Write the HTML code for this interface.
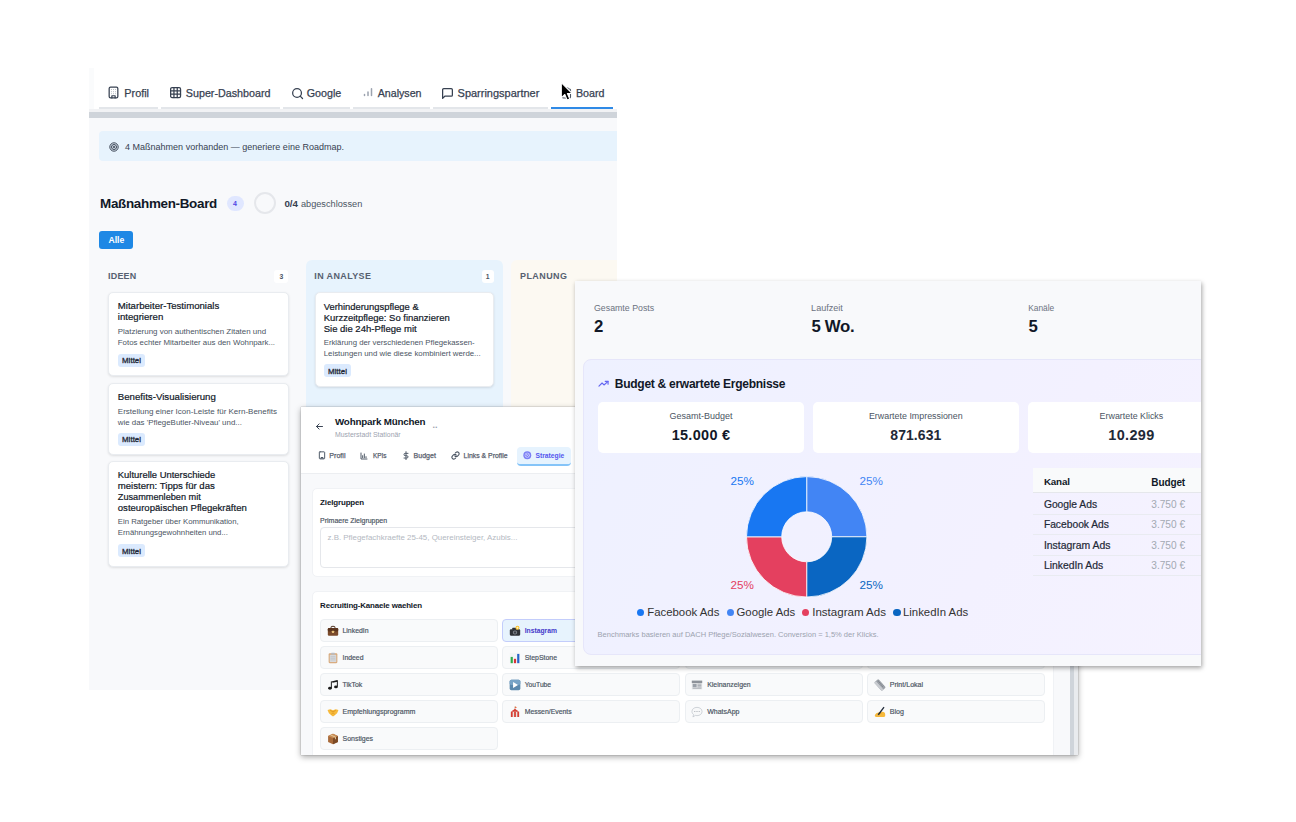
<!DOCTYPE html>
<html><head><meta charset="utf-8"><title>Composite</title><style>html,body{margin:0;padding:0;background:#fff}
body{width:1296px;height:822px;position:relative;overflow:hidden;font-family:"Liberation Sans",sans-serif}
.p{position:absolute;overflow:hidden}
.p div,.p span,.p svg{position:absolute;box-sizing:border-box}
.p span{white-space:pre}
</style></head><body>
<div class="p" style="left:89px;top:60px;width:528px;height:630px;background:#f8f9fb;"><div style="left:0.00px;top:0.00px;width:528.00px;height:52.00px;background:#fff;"></div>
<div style="left:0.00px;top:49.00px;width:528.00px;height:3.00px;background:#f1f2f4;"></div>
<div style="left:0.00px;top:8.00px;width:4.50px;height:41.00px;background:#fafbfc;"></div>
<div style="left:0.00px;top:52.00px;width:528.00px;height:6.00px;background:#cfd4da;"></div>
<div style="left:10.30px;top:47.30px;width:58.70px;height:1.70px;background:#e3e6ea;"></div>
<div style="left:72.10px;top:47.30px;width:118.70px;height:1.70px;background:#e3e6ea;"></div>
<div style="left:193.60px;top:47.30px;width:67.40px;height:1.70px;background:#e3e6ea;"></div>
<div style="left:264.00px;top:47.30px;width:77.00px;height:1.70px;background:#e3e6ea;"></div>
<div style="left:344.00px;top:47.30px;width:115.30px;height:1.70px;background:#e3e6ea;"></div>
<div style="left:462.00px;top:47.00px;width:62.00px;height:2.00px;background:#2f8ae6;"></div>
<span style="left:35.30px;top:26px;font-size:10.85px;line-height:14px;color:#374151;-webkit-text-stroke:0.25px #374151;">Profil</span>
<span style="left:96.80px;top:26px;font-size:10.74px;line-height:14px;color:#374151;-webkit-text-stroke:0.25px #374151;">Super-Dashboard</span>
<span style="left:217.80px;top:26px;font-size:10.71px;line-height:14px;color:#374151;-webkit-text-stroke:0.25px #374151;">Google</span>
<span style="left:288.70px;top:26px;font-size:10.66px;line-height:14px;color:#374151;letter-spacing:-0.005px;-webkit-text-stroke:0.25px #374151;">Analysen</span>
<span style="left:368.60px;top:26px;font-size:10.98px;line-height:14px;color:#374151;-webkit-text-stroke:0.25px #374151;">Sparringspartner</span>
<span style="left:487.00px;top:26px;font-size:10.69px;line-height:14px;color:#374151;letter-spacing:-0.006px;-webkit-text-stroke:0.25px #374151;">Board</span>
<svg style="left:18.30px;top:26.10px;" width="13" height="13" viewBox="0 0 24 24"><g fill="none" stroke="#374151" stroke-width="2.3" stroke-linecap="round" stroke-linejoin="round"><rect x="4" y="2" width="16" height="20" rx="2.5"/><path d="M9 22v-4h6v4"/></g><g fill="none" stroke="#9aa1ac" stroke-width="1.6" stroke-linecap="round"><path d="M8.5 6.5h.01M12 6.5h.01M15.5 6.5h.01M8.5 10.5h.01M12 10.5h.01M15.5 10.5h.01M8.5 14.2h.01M12 14.2h.01M15.5 14.2h.01"/></g></svg>
<svg style="left:80.00px;top:26.40px;" width="13.2" height="13.2" viewBox="0 0 24 24"><g fill="none" stroke="#374151" stroke-width="2.3" stroke-linecap="round" stroke-linejoin="round"><rect x="3" y="3" width="18" height="18" rx="2.5"/><path d="M3 9h18M3 15h18M9 3v18M15 3v18"/></g></svg>
<svg style="left:201.60px;top:26.60px;" width="13.2" height="13.2" viewBox="0 0 24 24"><g fill="none" stroke="#374151" stroke-width="2.3" stroke-linecap="round" stroke-linejoin="round"><circle cx="11" cy="11" r="8"/><path d="M21 21l-4.3-4.3"/></g></svg>
<svg style="left:272.50px;top:26.40px;" width="12" height="12" viewBox="0 0 24 24"><g fill="none" stroke="#9ca3af" stroke-width="3" stroke-linecap="round"><path d="M5 19v-2M12 19v-7M19 19V5.5"/></g></svg>
<svg style="left:352.00px;top:26.60px;" width="13" height="13" viewBox="0 0 24 24"><g fill="none" stroke="#374151" stroke-width="2.3" stroke-linecap="round" stroke-linejoin="round"><path d="M21 15a2 2 0 0 1-2 2H7l-4 4V5a2 2 0 0 1 2-2h14a2 2 0 0 1 2 2z"/></g></svg>
<svg style="left:472.00px;top:27.00px;" width="11" height="12" viewBox="0 0 22 24"><g fill="none" stroke="#4b5563" stroke-width="2.2" stroke-linejoin="round"><rect x="3" y="4" width="16" height="18" rx="2"/><path d="M8 2h6v4H8z" fill="#4b5563"/></g></svg>
<svg style="left:469.60px;top:20.50px;" width="15" height="21" viewBox="0 0 15 21"><path d="M2.3 1.6v15.2l3.5-3.3 2.4 5.6 2.6-1.1-2.4-5.5h4.9z" fill="#000" stroke="#fff" stroke-width="1.1" stroke-linejoin="round"/></svg>
<div style="left:10.00px;top:71.00px;width:530.00px;height:30.00px;background:#e7f3fd;border-radius:4px;"></div>
<svg style="left:20.00px;top:81.80px;" width="10" height="10" viewBox="0 0 24 24"><g fill="none" stroke="#374151" stroke-width="2.4"><circle cx="12" cy="12" r="10"/><circle cx="12" cy="12" r="6"/><circle cx="12" cy="12" r="2"/></g></svg>
<span style="left:36.00px;top:81px;font-size:9.01px;line-height:12px;color:#374151;letter-spacing:0.008px;">4 Maßnahmen vorhanden — generiere eine Roadmap.</span>
<span style="left:11.00px;top:135px;font-size:13.45px;line-height:17px;color:#111827;font-weight:700;letter-spacing:-0.314px;">Maßnahmen-Board</span>
<div style="left:137.50px;top:136.10px;width:17.00px;height:14.80px;background:#e0e7ff;border-radius:8px;"></div>
<span style="left:144.05px;top:139px;font-size:7px;line-height:9px;color:#4f46e5;font-weight:700;">4</span>
<div style="left:165.00px;top:132.30px;width:22.00px;height:22.00px;border:2px solid #e5e7eb;border-radius:50%;"></div>
<span style="left:195.40px;top:137px;font-size:9.78px;line-height:13px;color:#374151;font-weight:700;letter-spacing:0.007px;">0/4</span>
<span style="left:211.90px;top:138px;font-size:9.2px;line-height:12px;color:#4b5563;letter-spacing:0.008px;">abgeschlossen</span>
<div style="left:10.00px;top:171.00px;width:34.00px;height:17.60px;background:#1e88e5;border-radius:3px;"></div>
<span style="left:19.50px;top:175px;font-size:8.61px;line-height:11px;color:#fff;font-weight:700;letter-spacing:0.009px;">Alle</span>
<div style="left:216.80px;top:199.50px;width:197.40px;height:460.00px;background:#e7f3fd;border-radius:6px;"></div>
<div style="left:422.00px;top:199.50px;width:197.40px;height:460.00px;background:#fcf9f2;border-radius:6px;"></div>
<span style="left:19.00px;top:210px;font-size:8.96px;line-height:12px;color:#566070;font-weight:700;letter-spacing:0.225px;">IDEEN</span>
<span style="left:225.30px;top:210px;font-size:8.96px;line-height:12px;color:#566070;font-weight:700;letter-spacing:0.392px;">IN ANALYSE</span>
<span style="left:431.10px;top:210px;font-size:8.96px;line-height:12px;color:#566070;font-weight:700;letter-spacing:0.417px;">PLANUNG</span>
<div style="left:185.40px;top:209.70px;width:14.00px;height:13.00px;background:#fff;border-radius:3px;"></div>
<span style="left:190.51px;top:212px;font-size:6.8px;line-height:9px;color:#4b5563;font-weight:700;">3</span>
<div style="left:392.60px;top:209.70px;width:12.20px;height:13.00px;background:#fff;border-radius:3px;"></div>
<span style="left:396.81px;top:212px;font-size:6.8px;line-height:9px;color:#4b5563;font-weight:700;">1</span>
<div style="left:19.00px;top:231.80px;width:180.50px;height:84.40px;background:#fff;border:1px solid #e9ecf0;border-radius:5px;box-shadow:0 1px 2.5px rgba(0,0,0,.11);"></div>
<span style="left:28.80px;top:239px;font-size:9.62px;line-height:13px;color:#111827;-webkit-text-stroke:0.2px #111827;">Mitarbeiter-Testimonials</span>
<span style="left:28.80px;top:250px;font-size:9.63px;line-height:13px;color:#111827;-webkit-text-stroke:0.2px #111827;">integrieren</span>
<span style="left:28.80px;top:267px;font-size:7.95px;line-height:10px;color:#4b5563;">Platzierung von authentischen Zitaten und</span>
<span style="left:28.80px;top:278px;font-size:7.85px;line-height:10px;color:#4b5563;">Fotos echter Mitarbeiter aus den Wohnpark...</span>
<div style="left:28.80px;top:293.80px;width:27.50px;height:13.00px;background:#dbeafe;border-radius:3px;"></div>
<span style="left:33.05px;top:296px;font-size:7.84px;line-height:10px;color:#1f2937;letter-spacing:0.049px;-webkit-text-stroke:0.3px #1f2937;">Mittel</span>
<div style="left:19.00px;top:323.00px;width:180.50px;height:71.80px;background:#fff;border:1px solid #e9ecf0;border-radius:5px;box-shadow:0 1px 2.5px rgba(0,0,0,.11);"></div>
<span style="left:28.80px;top:330px;font-size:9.66px;line-height:13px;color:#111827;-webkit-text-stroke:0.2px #111827;">Benefits-Visualisierung</span>
<span style="left:28.80px;top:347px;font-size:8.0px;line-height:10px;color:#4b5563;">Erstellung einer Icon-Leiste für Kern-Benefits</span>
<span style="left:28.80px;top:358px;font-size:7.9px;line-height:10px;color:#4b5563;">wie das &#x27;PflegeButler-Niveau&#x27; und...</span>
<div style="left:28.80px;top:372.90px;width:27.50px;height:13.00px;background:#dbeafe;border-radius:3px;"></div>
<span style="left:33.05px;top:375px;font-size:7.84px;line-height:10px;color:#1f2937;letter-spacing:0.049px;-webkit-text-stroke:0.3px #1f2937;">Mittel</span>
<div style="left:19.00px;top:400.50px;width:180.50px;height:106.20px;background:#fff;border:1px solid #e9ecf0;border-radius:5px;box-shadow:0 1px 2.5px rgba(0,0,0,.11);"></div>
<span style="left:28.80px;top:409px;font-size:9.44px;line-height:12px;color:#111827;-webkit-text-stroke:0.2px #111827;">Kulturelle Unterschiede</span>
<span style="left:28.80px;top:420px;font-size:9.6px;line-height:12px;color:#111827;-webkit-text-stroke:0.2px #111827;">meistern: Tipps für das</span>
<span style="left:28.80px;top:431px;font-size:9.17px;line-height:12px;color:#111827;-webkit-text-stroke:0.2px #111827;">Zusammenleben mit</span>
<span style="left:28.80px;top:442px;font-size:9.55px;line-height:12px;color:#111827;-webkit-text-stroke:0.2px #111827;">osteuropäischen Pflegekräften</span>
<span style="left:28.80px;top:457px;font-size:7.78px;line-height:10px;color:#4b5563;">Ein Ratgeber über Kommunikation,</span>
<span style="left:28.80px;top:468px;font-size:7.77px;line-height:10px;color:#4b5563;">Ernährungsgewohnheiten und...</span>
<div style="left:28.80px;top:484.40px;width:27.50px;height:13.00px;background:#dbeafe;border-radius:3px;"></div>
<span style="left:33.05px;top:487px;font-size:7.84px;line-height:10px;color:#1f2937;letter-spacing:0.049px;-webkit-text-stroke:0.3px #1f2937;">Mittel</span>
<div style="left:226.00px;top:231.60px;width:178.70px;height:95.20px;background:#fff;border:1px solid #e9ecf0;border-radius:5px;box-shadow:0 1px 2.5px rgba(0,0,0,.11);"></div>
<span style="left:234.70px;top:241px;font-size:9.39px;line-height:12px;color:#111827;letter-spacing:0.006px;-webkit-text-stroke:0.2px #111827;">Verhinderungspflege &amp;</span>
<span style="left:234.70px;top:252px;font-size:9.49px;line-height:12px;color:#111827;-webkit-text-stroke:0.2px #111827;">Kurzzeitpflege: So finanzieren</span>
<span style="left:234.70px;top:263px;font-size:9.51px;line-height:12px;color:#111827;-webkit-text-stroke:0.2px #111827;">Sie die 24h-Pflege mit</span>
<span style="left:234.70px;top:278px;font-size:7.79px;line-height:10px;color:#4b5563;">Erklärung der verschiedenen Pflegekassen-</span>
<span style="left:234.70px;top:289px;font-size:7.85px;line-height:10px;color:#4b5563;">Leistungen und wie diese kombiniert werde...</span>
<div style="left:234.70px;top:304.40px;width:27.50px;height:13.00px;background:#dbeafe;border-radius:3px;"></div>
<span style="left:238.95px;top:307px;font-size:7.84px;line-height:10px;color:#1f2937;letter-spacing:0.049px;-webkit-text-stroke:0.3px #1f2937;">Mittel</span></div>
<div class="p" style="left:301px;top:407px;width:777px;height:348px;background:#f8f9fb;box-shadow:0 2px 6px rgba(0,0,0,.35),0 0 1px rgba(0,0,0,.4);overflow:hidden;"><div style="left:0.00px;top:0.00px;width:777.00px;height:66.70px;background:#fff;border-bottom:1px solid #eceef1;"></div>
<div style="left:753.30px;top:0.00px;width:24.00px;height:348.00px;background:#f8f9fb;"></div>
<div style="left:768.70px;top:0.00px;width:4.20px;height:348.00px;background:#cfd4da;"></div>
<div style="left:772.90px;top:0.00px;width:4.10px;height:348.00px;background:#e9ebee;"></div>
<svg style="left:14.00px;top:14.80px;" width="9" height="9" viewBox="0 0 24 24"><g fill="none" stroke="#374151" stroke-width="2.6" stroke-linecap="round" stroke-linejoin="round"><path d="M20 12H4M11 5l-7 7 7 7"/></g></svg>
<span style="left:34.00px;top:8px;font-size:9.79px;line-height:13px;color:#111827;font-weight:700;letter-spacing:-0.181px;">Wohnpark München</span>
<span style="left:131.40px;top:12px;font-size:8.96px;line-height:12px;color:#9ca3af;font-weight:700;letter-spacing:0.158px;">..</span>
<span style="left:34.00px;top:23px;font-size:6.91px;line-height:9px;color:#9ca3af;">Musterstadt Stationär</span>
<div style="left:215.90px;top:40.00px;width:53.70px;height:18.60px;background:#e6f3fe;border-radius:4px;border-bottom:2px solid #85c4f8;"></div>
<span style="left:28.30px;top:45px;font-size:7.11px;line-height:9px;color:#59616e;-webkit-text-stroke:0.25px #59616e;">Profil</span>
<span style="left:71.90px;top:45px;font-size:6.43px;line-height:8px;color:#59616e;letter-spacing:0.009px;-webkit-text-stroke:0.25px #59616e;">KPIs</span>
<span style="left:112.60px;top:44px;font-size:7.04px;line-height:9px;color:#59616e;-webkit-text-stroke:0.25px #59616e;">Budget</span>
<span style="left:162.60px;top:44px;font-size:6.88px;line-height:9px;color:#59616e;-webkit-text-stroke:0.25px #59616e;">Links &amp; Profile</span>
<span style="left:234.40px;top:44px;font-size:6.75px;line-height:9px;color:#5558ee;font-weight:700;">Strategie</span>
<svg style="left:16.50px;top:44.30px;" width="8" height="9" viewBox="0 0 24 26"><g fill="none" stroke="#4b5563" stroke-width="2.9" stroke-linecap="round" stroke-linejoin="round"><rect x="4" y="2" width="16" height="21" rx="2"/><path d="M9 23v-4h6v4"/></g></svg>
<svg style="left:59.40px;top:44.50px;" width="8" height="8" viewBox="0 0 24 24"><g fill="none" stroke="#4b5563" stroke-width="2.9" stroke-linecap="round" stroke-linejoin="round"><path d="M3 3v18h18M8 17v-6M13 17V6M18 17v-3"/></g></svg>
<svg style="left:101.00px;top:44.00px;" width="8" height="9.4" viewBox="0 0 24 28"><g fill="none" stroke="#4b5563" stroke-width="2.9" stroke-linecap="round" stroke-linejoin="round"><path d="M12 2v24M18 7H9.5a3.5 3.5 0 0 0 0 7h5a3.5 3.5 0 0 1 0 7H6"/></g></svg>
<svg style="left:150.00px;top:44.30px;" width="9" height="9" viewBox="0 0 24 24"><g fill="none" stroke="#4b5563" stroke-width="2.9" stroke-linecap="round" stroke-linejoin="round"><path d="M10 13a5 5 0 0 0 7.5.5l3-3a5 5 0 0 0-7-7l-1.7 1.7"/><path d="M14 11a5 5 0 0 0-7.5-.5l-3 3a5 5 0 0 0 7 7l1.7-1.7"/></g></svg>
<svg style="left:222.00px;top:44.40px;" width="8.6" height="8.6" viewBox="0 0 24 24"><circle cx="12" cy="12" r="11" fill="#7b7ff5"/><g fill="none" stroke="#c7cbfd" stroke-width="2.2" stroke-linecap="round"><circle cx="12" cy="12" r="6.3"/><path d="M8.500 8.500l7 7M15.500 8.500l-7 7"/></g></svg>
<div style="left:11.00px;top:81.20px;width:742.30px;height:88.80px;background:#fff;border:1px solid #f0f2f5;border-radius:5px;"></div>
<span style="left:19.10px;top:91px;font-size:7.95px;line-height:10px;color:#111827;font-weight:700;letter-spacing:-0.129px;">Zielgruppen</span>
<span style="left:19.10px;top:109px;font-size:6.97px;line-height:9px;color:#4b5563;-webkit-text-stroke:0.18px #4b5563;">Primaere Zielgruppen</span>
<div style="left:19.10px;top:119.70px;width:726.00px;height:41.70px;background:#fff;border:1px solid #e5e7eb;border-radius:4px;"></div>
<span style="left:26.50px;top:126px;font-size:7.91px;line-height:10px;color:#b4b9c2;">z.B. Pflegefachkraefte 25-45, Quereinsteiger, Azubis...</span>
<div style="left:11.00px;top:184.20px;width:742.30px;height:180.00px;background:#fff;border:1px solid #f0f2f5;border-radius:5px;"></div>
<span style="left:19.10px;top:194px;font-size:7.92px;line-height:10px;color:#111827;font-weight:700;letter-spacing:-0.141px;">Recruiting-Kanaele waehlen</span>
<div style="left:19.20px;top:212.30px;width:177.80px;height:22.70px;background:#f9fafb;border:1px solid #eceff2;border-radius:4px;"></div>
<svg style="left:25.50px;top:217.70px;" width="12" height="12" viewBox="0 0 22 22"><rect x="7.5" y="2.5" width="7" height="5" rx="1.5" fill="none" stroke="#4a2c1a" stroke-width="1.8"/><rect x="1.5" y="5.5" width="19" height="14" rx="2.2" fill="#7a4a2b"/><rect x="1.5" y="5.5" width="19" height="6.5" rx="2" fill="#5b341d"/><rect x="9" y="10.5" width="4" height="4" rx=".8" fill="#e9c27a"/></svg>
<span style="left:41.50px;top:219px;font-size:6.9px;line-height:9px;color:#4b5563;-webkit-text-stroke:0.18px #4b5563;">LinkedIn</span>
<div style="left:201.40px;top:212.30px;width:177.80px;height:22.70px;background:#e7f3fd;border:1px solid #c3cdfb;border-radius:4px;"></div>
<svg style="left:207.70px;top:217.70px;" width="12" height="12" viewBox="0 0 22 22"><rect x="1.5" y="8" width="19" height="11.5" rx="2" fill="#2f3237"/><rect x="6" y="5" width="7" height="4" rx="1" fill="#2f3237"/><circle cx="11" cy="13.8" r="3.8" fill="#8a8f98"/><circle cx="11" cy="13.8" r="2.2" fill="#3c4047"/><circle cx="15.5" cy="5" r="3.6" fill="#fbbf24"/><circle cx="15.5" cy="5" r="1.8" fill="#fff3c4"/></svg>
<span style="left:223.70px;top:219px;font-size:6.75px;line-height:9px;color:#4338ca;font-weight:700;letter-spacing:-0.007px;">Instagram</span>
<div style="left:383.90px;top:212.30px;width:177.80px;height:22.70px;background:#f9fafb;border:1px solid #eceff2;border-radius:4px;"></div>
<div style="left:566.40px;top:212.30px;width:177.80px;height:22.70px;background:#f9fafb;border:1px solid #eceff2;border-radius:4px;"></div>
<div style="left:19.20px;top:239.30px;width:177.80px;height:22.70px;background:#f9fafb;border:1px solid #eceff2;border-radius:4px;"></div>
<svg style="left:25.50px;top:244.70px;" width="12" height="12" viewBox="0 0 22 22"><rect x="3" y="2.5" width="16" height="18" rx="2" fill="#d9a878"/><rect x="5" y="5" width="12" height="13.5" fill="#d7d9dc"/><rect x="7.5" y="1.2" width="7" height="3.6" rx="1" fill="#b9bcc2"/><path d="M6.5 8.5h9M6.5 11.5h9M6.5 14.5h9" stroke="#b5b8be" stroke-width="1"/></svg>
<span style="left:41.50px;top:246px;font-size:6.86px;line-height:9px;color:#4b5563;-webkit-text-stroke:0.18px #4b5563;">Indeed</span>
<div style="left:201.40px;top:239.30px;width:177.80px;height:22.70px;background:#f9fafb;border:1px solid #eceff2;border-radius:4px;"></div>
<svg style="left:207.70px;top:244.70px;" width="12" height="12" viewBox="0 0 22 22"><rect x="1.5" y="1.5" width="19" height="19" fill="#f3f5f7"/><rect x="3" y="9" width="4" height="11.5" fill="#2eaa4a"/><rect x="9" y="12.5" width="4" height="8" fill="#d8343a"/><rect x="15" y="3.5" width="4" height="17" fill="#2563c9"/></svg>
<span style="left:223.70px;top:246px;font-size:6.94px;line-height:9px;color:#4b5563;-webkit-text-stroke:0.18px #4b5563;">StepStone</span>
<div style="left:383.90px;top:239.30px;width:177.80px;height:22.70px;background:#f9fafb;border:1px solid #eceff2;border-radius:4px;"></div>
<div style="left:566.40px;top:239.30px;width:177.80px;height:22.70px;background:#f9fafb;border:1px solid #eceff2;border-radius:4px;"></div>
<div style="left:19.20px;top:266.30px;width:177.80px;height:22.70px;background:#f9fafb;border:1px solid #eceff2;border-radius:4px;"></div>
<svg style="left:25.50px;top:271.70px;" width="12" height="12" viewBox="0 0 22 22"><path d="M8 4.5l11-2.5v3l-8.6 2z" fill="#1a1a1a"/><path d="M8 4.5v12M19 2.5v11.5" stroke="#1a1a1a" stroke-width="1.8"/><ellipse cx="5.4" cy="17" rx="3.4" ry="2.6" fill="#1a1a1a"/><ellipse cx="16.4" cy="14.5" rx="3.4" ry="2.6" fill="#1a1a1a"/></svg>
<span style="left:41.50px;top:273px;font-size:6.91px;line-height:9px;color:#4b5563;-webkit-text-stroke:0.18px #4b5563;">TikTok</span>
<div style="left:201.40px;top:266.30px;width:177.80px;height:22.70px;background:#f9fafb;border:1px solid #eceff2;border-radius:4px;"></div>
<svg style="left:207.70px;top:271.70px;" width="12" height="12" viewBox="0 0 22 22"><rect x="1.2" y="1.2" width="19.6" height="19.6" rx="3.2" fill="#5b88ad"/><rect x="1.2" y="1.2" width="19.6" height="9.8" rx="3.2" fill="#78a3c6"/><path d="M7.5 5.5l9 5.5-9 5.5z" fill="#fff"/></svg>
<span style="left:223.70px;top:273px;font-size:6.72px;line-height:9px;color:#4b5563;-webkit-text-stroke:0.18px #4b5563;">YouTube</span>
<div style="left:383.90px;top:266.30px;width:177.80px;height:22.70px;background:#f9fafb;border:1px solid #eceff2;border-radius:4px;"></div>
<svg style="left:390.20px;top:271.70px;" width="12" height="12" viewBox="0 0 22 22"><rect x="1.5" y="3" width="19" height="16" fill="#e1e3e6"/><rect x="1.5" y="3" width="19" height="4.4" fill="#8d9299"/><rect x="3.2" y="9" width="7" height="6" fill="#9aa0a8"/><path d="M12 9.5h7M12 12h7M12 14.5h7M3.2 17h15.8" stroke="#8d9299" stroke-width="1.1"/></svg>
<span style="left:406.20px;top:273px;font-size:6.92px;line-height:9px;color:#4b5563;letter-spacing:0.008px;-webkit-text-stroke:0.18px #4b5563;">Kleinanzeigen</span>
<div style="left:566.40px;top:266.30px;width:177.80px;height:22.70px;background:#f9fafb;border:1px solid #eceff2;border-radius:4px;"></div>
<svg style="left:572.70px;top:271.70px;" width="12" height="12" viewBox="0 0 22 22"><g transform="rotate(-42 11 11)"><rect x="6" y="0.5" width="10" height="21" rx="2.2" fill="#9da2a9"/><rect x="6" y="0.5" width="4.2" height="21" rx="2" fill="#c9ccd1"/><path d="M11.5 4h3.500M11.5 7h3.500M11.500 10h3.500M11.500 13h3.500M11.500 16h3.500" stroke="#6e737b" stroke-width="1"/></g></svg>
<span style="left:588.70px;top:274px;font-size:7.09px;line-height:9px;color:#4b5563;-webkit-text-stroke:0.18px #4b5563;">Print/Lokal</span>
<div style="left:19.20px;top:293.30px;width:177.80px;height:22.70px;background:#f9fafb;border:1px solid #eceff2;border-radius:4px;"></div>
<svg style="left:25.50px;top:298.70px;" width="12" height="12" viewBox="0 0 22 22"><path d="M1 7.5l5-1.5 5 2 5-2 5 1.5-2.5 6-6.5 5.5h-2L3.5 13.5z" fill="#f6b93b"/><path d="M6 8l5 2.8L16 8" fill="none" stroke="#d48a17" stroke-width="1.2"/><path d="M8 15l3-2.5 3 2.5" fill="none" stroke="#d48a17" stroke-width="1"/></svg>
<span style="left:41.50px;top:300px;font-size:7.02px;line-height:9px;color:#4b5563;-webkit-text-stroke:0.18px #4b5563;">Empfehlungsprogramm</span>
<div style="left:201.40px;top:293.30px;width:177.80px;height:22.70px;background:#f9fafb;border:1px solid #eceff2;border-radius:4px;"></div>
<svg style="left:207.70px;top:298.70px;" width="12" height="12" viewBox="0 0 22 22"><path d="M11 4.5c-3 3-6 5-8 6v9.5h16v-9.5c-2-1-5-3-8-6z" fill="#e8e1dc"/><path d="M3 10.5c2-1 5-3 8-6 3 3 6 5 8 6z" fill="#d63c33"/><path d="M3.5 11h3.2v9H3.5zM9.4 11h3.2v9H9.4zM15.3 11h3.2v9h-3.2z" fill="#d63c33"/><path d="M11 4.5V1" stroke="#8a5a2b" stroke-width="1"/><path d="M11 1l4 1.3-4 1.3z" fill="#e85b2a"/></svg>
<span style="left:223.70px;top:300px;font-size:6.87px;line-height:9px;color:#4b5563;letter-spacing:0.007px;-webkit-text-stroke:0.18px #4b5563;">Messen/Events</span>
<div style="left:383.90px;top:293.30px;width:177.80px;height:22.70px;background:#f9fafb;border:1px solid #eceff2;border-radius:4px;"></div>
<svg style="left:390.20px;top:298.70px;" width="12" height="12" viewBox="0 0 22 22"><path d="M11 2.5c5.4 0 9.3 3.3 9.3 7.6s-3.900 7.600-9.300 7.600c-1 0-2-.1-2.900-.4L3.500 20l1.200-4.300C2.900 14.300 1.700 12.300 1.700 10.100 1.700 5.800 5.600 2.500 11 2.500z" fill="#f7f8f9" stroke="#b9bec6" stroke-width="1.2"/><circle cx="7" cy="10.2" r="1" fill="#9aa0a8"/><circle cx="11" cy="10.2" r="1" fill="#9aa0a8"/><circle cx="15" cy="10.2" r="1" fill="#9aa0a8"/></svg>
<span style="left:406.20px;top:300px;font-size:7.0px;line-height:9px;color:#4b5563;-webkit-text-stroke:0.18px #4b5563;">WhatsApp</span>
<div style="left:566.40px;top:293.30px;width:177.80px;height:22.70px;background:#f9fafb;border:1px solid #eceff2;border-radius:4px;"></div>
<svg style="left:572.70px;top:298.70px;" width="12" height="12" viewBox="0 0 22 22"><path d="M1.500 17.500c1-3.500 4-5.500 7.500-5.500l7-1.500c2.500 0 4.500 2 4.500 4.500v3c0 1.100-.9 2-2 2H4c-1.500 0-2.900-1-2.500-2.500z" fill="#f6b93b"/><path d="M9 12l4.500 1.800" stroke="#d48a17" stroke-width="1"/><path d="M6.500 15.500L17.500 1.500l1.800 1.300L9 16.800z" fill="#1f2937"/><path d="M6.500 15.500L6 18l3-1.200z" fill="#d9a878"/></svg>
<span style="left:588.70px;top:301px;font-size:7.09px;line-height:9px;color:#4b5563;letter-spacing:0.007px;-webkit-text-stroke:0.18px #4b5563;">Blog</span>
<div style="left:19.20px;top:320.20px;width:177.80px;height:22.70px;background:#f9fafb;border:1px solid #eceff2;border-radius:4px;"></div>
<svg style="left:25.50px;top:325.60px;" width="12" height="12" viewBox="0 0 22 22"><path d="M11 1.5l9 4v11l-9 4-9-4v-11z" fill="#a86a3a"/><path d="M11 9.5l9-4v11l-9 4z" fill="#7c4a25"/><path d="M2 5.5l9 4 9-4-9-4z" fill="#c98d55"/><path d="M6.5 3.5l9 4v4" fill="none" stroke="#e8d3a8" stroke-width="1.6"/></svg>
<span style="left:41.50px;top:327px;font-size:6.97px;line-height:9px;color:#4b5563;-webkit-text-stroke:0.18px #4b5563;">Sonstiges</span></div>
<div class="p" style="left:575px;top:281px;width:626px;height:385px;background:#f8f9fb;box-shadow:0.5px 1.5px 4.5px rgba(0,0,0,.36);"><span style="left:19.00px;top:22px;font-size:8.8px;line-height:11px;color:#6b7280;">Gesamte Posts</span>
<span style="left:19.00px;top:35px;font-size:16.8px;line-height:22px;color:#111827;font-weight:700;letter-spacing:-0.244px;">2</span>
<span style="left:236.10px;top:21px;font-size:9.05px;line-height:12px;color:#6b7280;">Laufzeit</span>
<span style="left:236.40px;top:35px;font-size:16.77px;line-height:22px;color:#111827;font-weight:700;letter-spacing:-0.281px;">5 Wo.</span>
<span style="left:453.20px;top:22px;font-size:8.39px;line-height:11px;color:#6b7280;">Kanäle</span>
<span style="left:453.40px;top:35px;font-size:16.8px;line-height:22px;color:#111827;font-weight:700;letter-spacing:-0.244px;">5</span>
<div style="left:8.30px;top:78.00px;width:700.00px;height:295.60px;background:linear-gradient(120deg,#eef1ff 0%,#f3f1ff 60%,#f6f3ff 100%);border:1px solid #e6e6fa;border-radius:8px;"></div>
<svg style="left:23.00px;top:96.50px;" width="11.5" height="11.5" viewBox="0 0 24 24"><g fill="none" stroke="#6366f1" stroke-width="2.4" stroke-linecap="round" stroke-linejoin="round"><path d="M2 17l6.5-6.5 4 4L21 7"/><path d="M15 7h6v6"/></g></svg>
<span style="left:39.80px;top:95px;font-size:12.04px;line-height:16px;color:#111827;font-weight:700;letter-spacing:-0.283px;">Budget &amp; erwartete Ergebnisse</span>
<div style="left:23.00px;top:121.40px;width:206.10px;height:51.00px;background:#fff;border-radius:5px;"></div>
<span style="left:94.55px;top:129px;font-size:9.0px;line-height:12px;color:#4b5563;">Gesamt-Budget</span>
<span style="left:96.70px;top:145px;font-size:14.44px;line-height:19px;color:#111827;font-weight:700;letter-spacing:0.312px;">15.000 €</span>
<div style="left:237.80px;top:121.40px;width:206.10px;height:51.00px;background:#fff;border-radius:5px;"></div>
<span style="left:293.95px;top:129px;font-size:8.88px;line-height:12px;color:#4b5563;">Erwartete Impressionen</span>
<span style="left:315.30px;top:145px;font-size:13.97px;line-height:18px;color:#1f2937;font-weight:700;letter-spacing:0.086px;">871.631</span>
<div style="left:453.40px;top:121.40px;width:206.10px;height:51.00px;background:#fff;border-radius:5px;"></div>
<span style="left:524.60px;top:129px;font-size:8.88px;line-height:12px;color:#4b5563;">Erwartete Klicks</span>
<span style="left:533.35px;top:145px;font-size:14.45px;line-height:19px;color:#1f2937;font-weight:700;letter-spacing:0.338px;">10.299</span>
<svg style="left:0;top:0" width="626" height="385" viewBox="0 0 626 385"><path d="M231.70 195.60A60.2 60.2 0 0 1 291.90 255.80L256.70 255.80A25 25 0 0 0 231.70 230.80Z" fill="#4285f4" stroke="#fff" stroke-width="0.8"/><path d="M291.90 255.80A60.2 60.2 0 0 1 231.70 316.00L231.70 280.80A25 25 0 0 0 256.70 255.80Z" fill="#0a66c2" stroke="#fff" stroke-width="0.8"/><path d="M231.70 316.00A60.2 60.2 0 0 1 171.50 255.80L206.70 255.80A25 25 0 0 0 231.70 280.80Z" fill="#e4405f" stroke="#fff" stroke-width="0.8"/><path d="M171.50 255.80A60.2 60.2 0 0 1 231.70 195.60L231.70 230.80A25 25 0 0 0 206.70 255.80Z" fill="#1877f2" stroke="#fff" stroke-width="0.8"/></svg>
<span style="left:155.60px;top:192px;font-size:11.69px;line-height:15px;color:#1877f2;">25%</span>
<span style="left:284.60px;top:192px;font-size:11.69px;line-height:15px;color:#4285f4;">25%</span>
<span style="left:155.60px;top:296px;font-size:11.69px;line-height:15px;color:#e4405f;">25%</span>
<span style="left:284.60px;top:296px;font-size:11.69px;line-height:15px;color:#0a66c2;">25%</span>
<div style="left:62.10px;top:327.90px;width:7.20px;height:7.20px;background:#1877f2;border-radius:50%;"></div>
<span style="left:72.20px;top:324px;font-size:11.4px;line-height:15px;color:#333;">Facebook Ads</span>
<div style="left:151.90px;top:327.90px;width:7.20px;height:7.20px;background:#4285f4;border-radius:50%;"></div>
<span style="left:161.50px;top:324px;font-size:11.36px;line-height:15px;color:#333;">Google Ads</span>
<div style="left:227.10px;top:327.90px;width:7.20px;height:7.20px;background:#e4405f;border-radius:50%;"></div>
<span style="left:237.20px;top:324px;font-size:11.55px;line-height:15px;color:#333;">Instagram Ads</span>
<div style="left:318.40px;top:327.90px;width:7.20px;height:7.20px;background:#0a66c2;border-radius:50%;"></div>
<span style="left:328.00px;top:324px;font-size:11.39px;line-height:15px;color:#333;">LinkedIn Ads</span>
<span style="left:22.60px;top:349px;font-size:7.52px;line-height:10px;color:#9ca3af;">Benchmarks basieren auf DACH Pflege/Sozialwesen. Conversion = 1,5% der Klicks.</span>
<div style="left:457.90px;top:186.60px;width:260.00px;height:25.80px;background:#f9fafb;border-bottom:1px solid #e5e7eb;"></div>
<span style="left:468.90px;top:194px;font-size:9.84px;line-height:13px;color:#111827;font-weight:700;letter-spacing:-0.193px;">Kanal</span>
<span style="left:576.30px;top:195px;font-size:10.01px;line-height:13px;color:#111827;font-weight:700;letter-spacing:-0.109px;">Budget</span>
<span style="left:468.90px;top:217px;font-size:10.29px;line-height:13px;color:#1f2937;-webkit-text-stroke:0.2px #1f2937;">Google Ads</span>
<span style="left:576.30px;top:217px;font-size:10.14px;line-height:13px;color:#a3a9b3;">3.750 €</span>
<div style="left:457.90px;top:232.60px;width:260.00px;height:1.00px;background:#e9ebf1;"></div>
<span style="left:468.90px;top:237px;font-size:10.27px;line-height:13px;color:#1f2937;-webkit-text-stroke:0.2px #1f2937;">Facebook Ads</span>
<span style="left:576.30px;top:237px;font-size:10.14px;line-height:13px;color:#a3a9b3;">3.750 €</span>
<div style="left:457.90px;top:253.10px;width:260.00px;height:1.00px;background:#e9ebf1;"></div>
<span style="left:468.90px;top:258px;font-size:10.42px;line-height:14px;color:#1f2937;letter-spacing:0.005px;-webkit-text-stroke:0.2px #1f2937;">Instagram Ads</span>
<span style="left:576.30px;top:258px;font-size:10.14px;line-height:13px;color:#a3a9b3;">3.750 €</span>
<div style="left:457.90px;top:273.60px;width:260.00px;height:1.00px;background:#e9ebf1;"></div>
<span style="left:468.90px;top:278px;font-size:10.36px;line-height:13px;color:#1f2937;-webkit-text-stroke:0.2px #1f2937;">LinkedIn Ads</span>
<span style="left:576.30px;top:278px;font-size:10.14px;line-height:13px;color:#a3a9b3;">3.750 €</span>
<div style="left:457.90px;top:294.10px;width:260.00px;height:1.00px;background:#e9ebf1;"></div></div>
</body></html>
